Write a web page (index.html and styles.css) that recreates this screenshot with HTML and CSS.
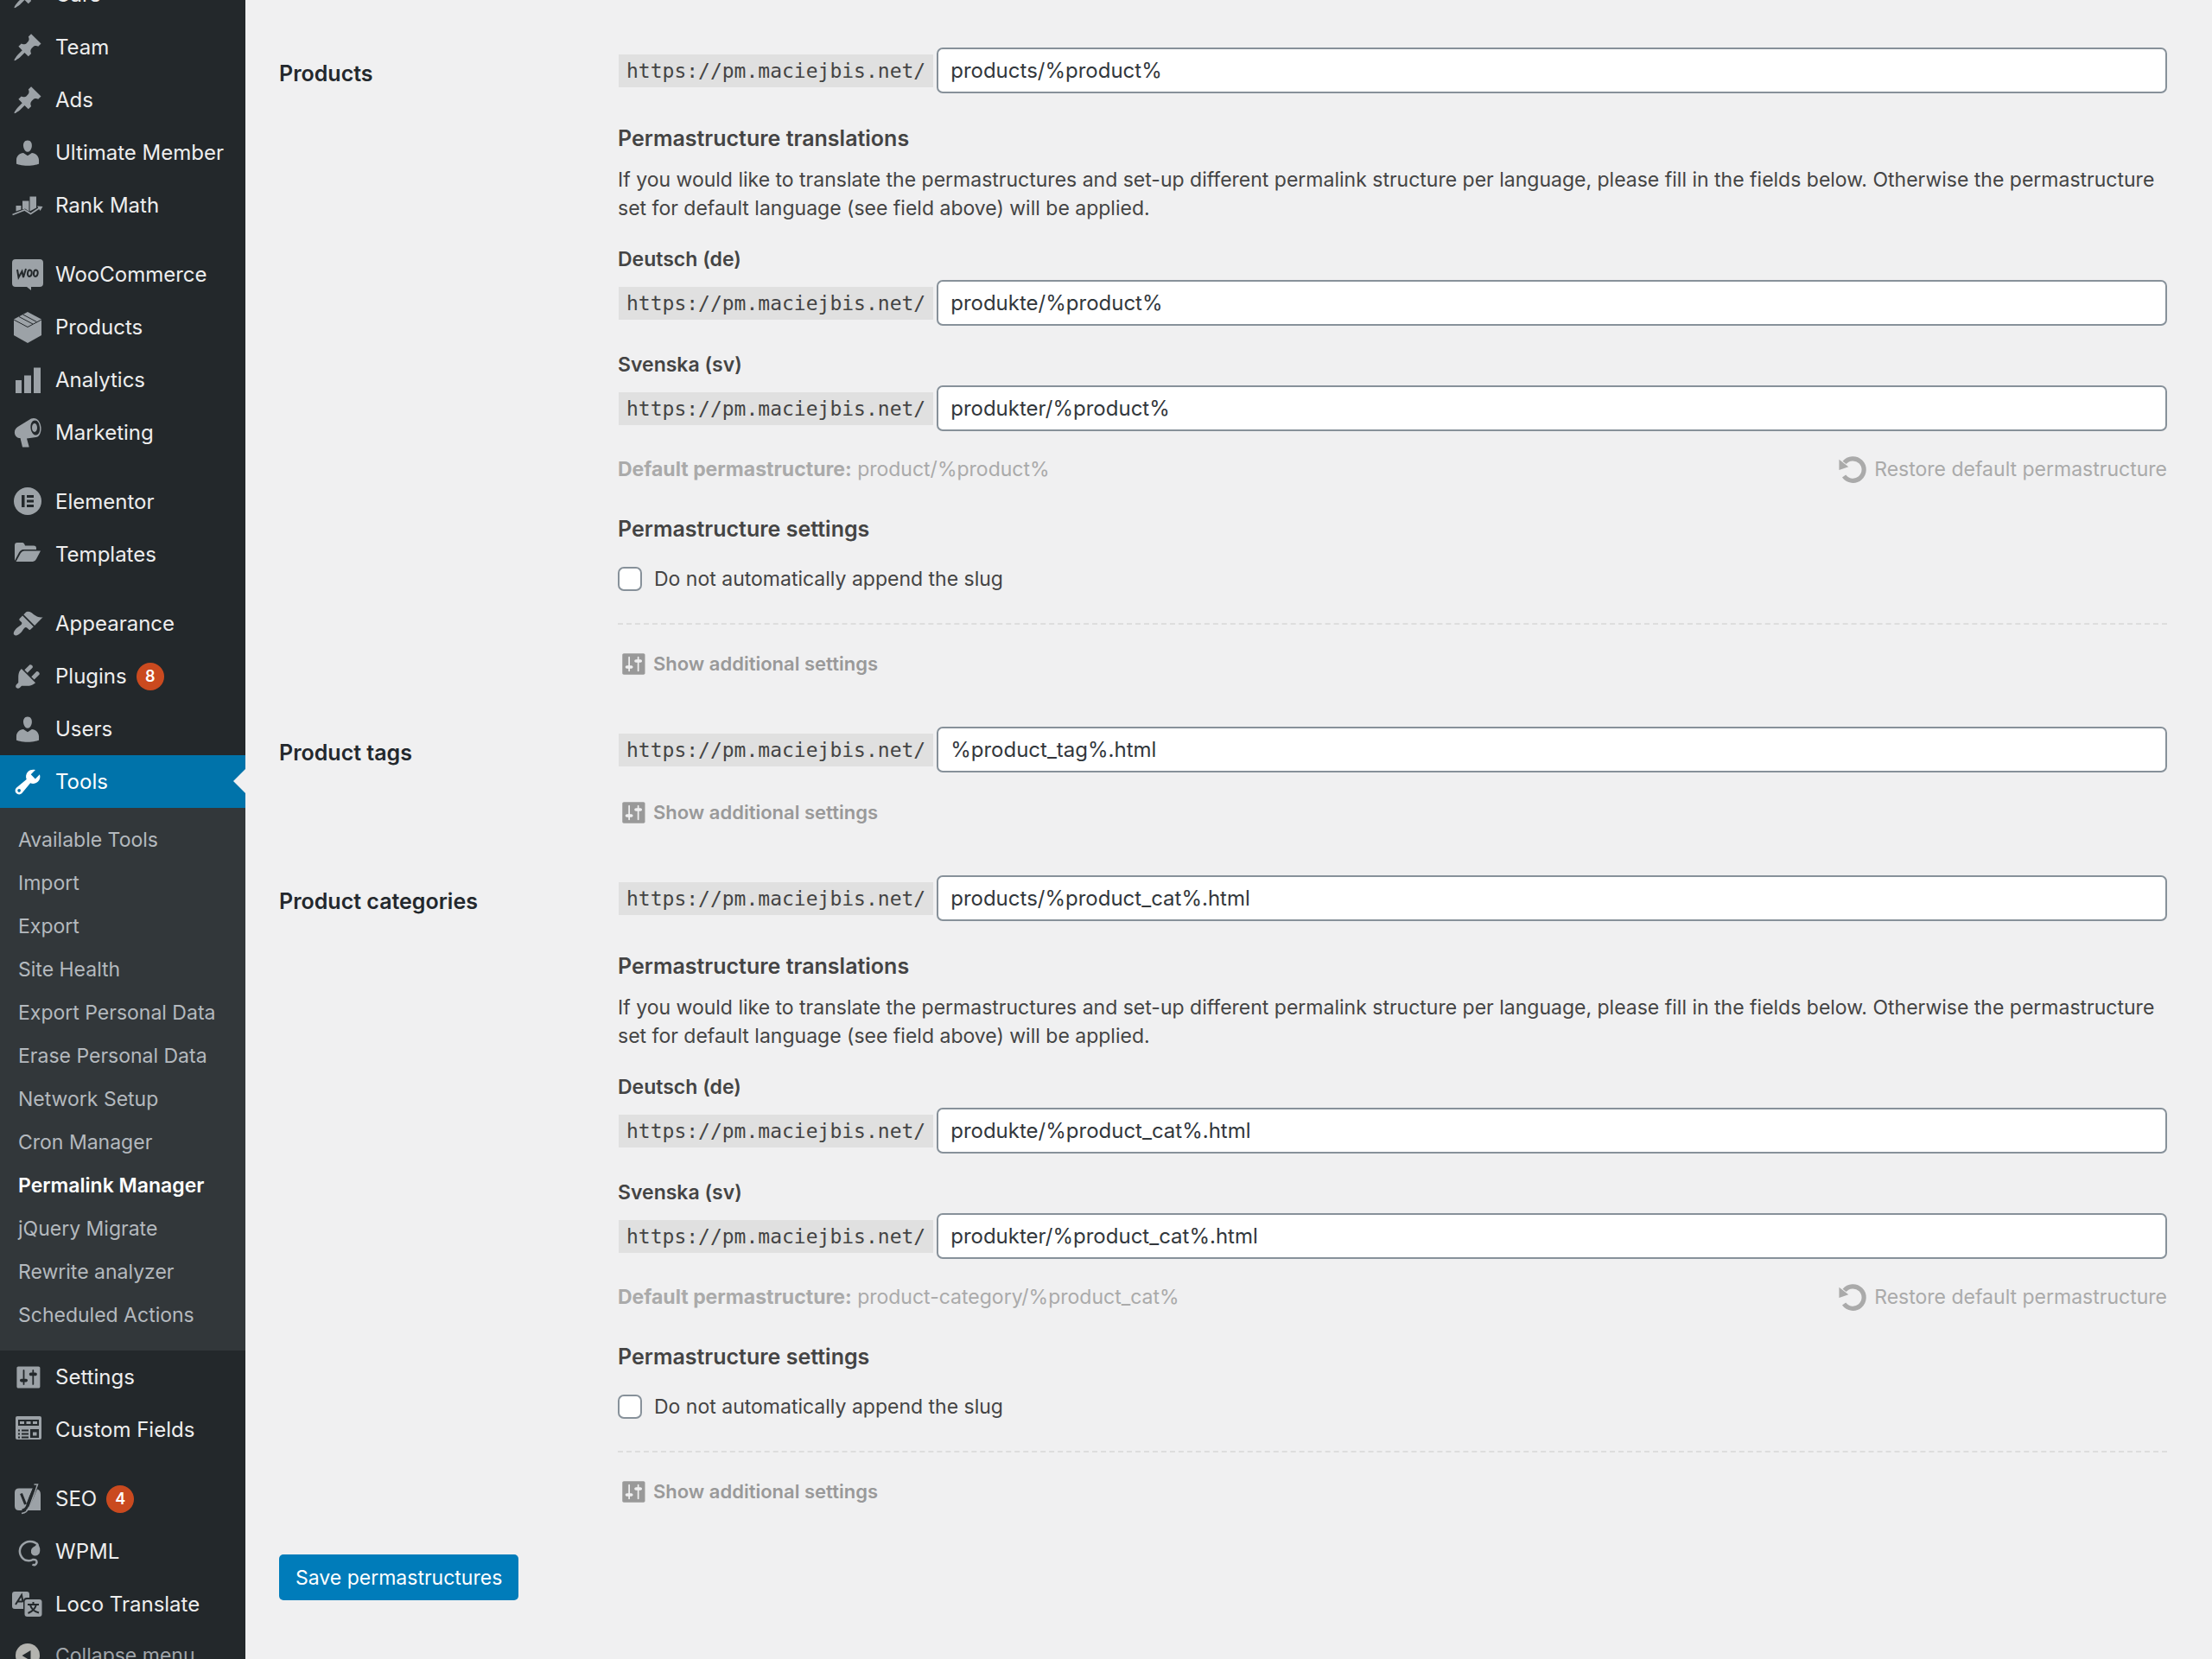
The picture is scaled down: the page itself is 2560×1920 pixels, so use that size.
FILE: index.html
```html
<!DOCTYPE html>
<html lang="en">
<head>
<meta charset="utf-8">
<title>Permalink Manager</title>
<link rel="stylesheet" href="styles.css">
</head>
<body>
<svg class="sprite" aria-hidden="true">
  <symbol id="pin" viewBox="0 0 20 20"><path d="M10.44 3.02l1.82-1.82 6.36 6.35-1.83 1.82c-1.05-.68-2.48-.57-3.41.36l-.75.75c-.92.93-1.04 2.35-.35 3.41l-1.83 1.82-2.41-2.41-2.8 2.79c-.42.42-3.38 2.71-3.8 2.29s1.86-3.39 2.28-3.81l2.79-2.79L4.1 9.36l1.83-1.82c1.05.69 2.48.57 3.4-.36l.75-.75c.93-.92 1.05-2.35.36-3.41z"/></symbol>
  <symbol id="user" viewBox="0 0 20 20"><path d="M10 9.25c-2.27 0-2.73-3.44-2.73-3.44C7 4.02 7.82 2 9.97 2c2.16 0 2.98 2.02 2.71 3.81 0 0-.41 3.44-2.68 3.44zm0 2.57L12.72 10c2.39 0 4.52 2.33 4.52 4.53v2.49s-3.65 1.13-7.24 1.13c-3.65 0-7.24-1.13-7.24-1.13v-2.49c0-2.25 1.94-4.48 4.47-4.48z"/></symbol>
  <symbol id="sliders" viewBox="0 0 20 20"><path d="M18 16V4c0-.55-.45-1-1-1H4c-.55 0-1 .45-1 1v12c0 .55.45 1 1 1h13c.55 0 1-.45 1-1zM8 11h1c.55 0 1 .45 1 1s-.45 1-1 1H8v1.5c0 .28-.22.5-.5.5s-.5-.22-.5-.5V13H6c-.55 0-1-.45-1-1s.45-1 1-1h1V5.5c0-.28.22-.5.5-.5s.5.22.5.5V11zm5-2h-1c-.55 0-1-.45-1-1s.45-1 1-1h1V5.500c0-.28.22-.5.5-.5s.5.22.5.5V7h1c.55 0 1 .45 1 1s-.45 1-1 1h-1v5.500c0 .28-.22.5-.5.5s-.5-.22-.5-.5V9z"/></symbol>
  <symbol id="restore" viewBox="0 0 36 36"><path d="M8 10A13.500 13.500 0 1 1 7.500 26.500" fill="none" stroke="currentColor" stroke-width="5.500"/><path d="M1.500 6v13l11.500-4z"/></symbol>
</svg>
<div class="shell">
  <nav class="menu" aria-label="Main menu">
    <ul class="menu-list">
      <li><a class="item" href="#"><svg class="icon"><use href="#pin"/></svg>Cars</a></li>
      <li><a class="item" href="#"><svg class="icon"><use href="#pin"/></svg>Team</a></li>
      <li><a class="item" href="#"><svg class="icon"><use href="#pin"/></svg>Ads</a></li>
      <li><a class="item" href="#"><svg class="icon"><use href="#user"/></svg>Ultimate Member</a></li>
      <li><a class="item" href="#"><svg class="icon" viewBox="0 0 36 36"><path d="M4.500 18h6v4.500l-6 2zM12 12.500h7.500v12L15 21.500l-3 1zM20.500 7.500h7.500v13l-7.500 4z"/><path d="M.5 28.500l14-5.500 7 4.500 10.500-7" fill="none" stroke="currentColor" stroke-width="1.800"/><path d="M29 18.500l6.500.500-3 5z"/></svg>Rank Math</a></li>
      <li class="gap"><a class="item" href="#"><svg class="icon" viewBox="0 0 36 36"><path d="M4 0h28q4 0 4 4v24q0 4-4 4H22v4l-5-4H4q-4 0-4-4V4q0-4 4-4z"/><path class="cut-line" d="M6 12l1.500 9 4-7 1.500 7 3-10M20.500 12.500c-3 0-3.500 7.500-.5 7.500s4-7.500.5-7.500zM27.500 12.500c-3 0-3.500 7.500-.5 7.500s4-7.500.5-7.500z"/></svg>WooCommerce</a></li>
      <li><a class="item" href="#"><svg class="icon" viewBox="0 0 36 36"><path d="M18 0l16 8.500V27L18 36 2 27V8.500z"/><path class="cut-line thin" d="M2 9l16 8.500L34 9M8 5.500l16 8.500M12.500 3l16 8.500"/></svg>Products</a></li>
      <li><a class="item" href="#"><svg class="icon" viewBox="0 0 36 36"><path d="M4 18h7v15H4zM14 12.500h8V33h-8zM25 3.500h8V33h-8z"/></svg>Analytics</a></li>
      <li><a class="item" href="#"><svg class="icon" viewBox="0 0 36 36"><path fill-rule="evenodd" d="M22 1.500c6-2.500 11 3 11.500 10 .5 6-2 11.500-6 11.500l-10.500 1.500 2.500 9q.5 1-1 1h-6.500L9.500 24C6 24 3.500 22 3 18.500S4 13 6.500 11zM26.500 3.500c-3.500 0-5.500 4-5 9s3.500 8.500 6.500 8c3-.5 4.500-4 4-9s-2.500-8-5.500-8z"/><ellipse cx="26" cy="12" rx="3" ry="5"/></svg>Marketing</a></li>
      <li class="gap"><a class="item" href="#"><svg class="icon" viewBox="0 0 36 36"><circle cx="18" cy="17" r="16"/><path class="cut" d="M11 10h3.500v14H11zM17 10h8v3h-8zM17 15.500h8v3h-8zM17 21h8v3h-8z"/></svg>Elementor</a></li>
      <li><a class="item" href="#"><svg class="icon" viewBox="0 0 36 36"><path d="M3 25V7q0-3 3-3h6q2 0 3 3.500h10q3 0 3 3v1.500H13q-3 0-5 3.500z"/><path d="M4.500 26l5.500-10q1.500-2.500 4-2.500h19L28 23q-1.500 3-4 3z"/></svg>Templates</a></li>
      <li class="gap"><a class="item" href="#"><svg class="icon" viewBox="0 0 20 20"><path d="M14.480 11.060L7.410 3.990l1.500-1.500c.5-.56 2.300-.47 3.510.32 1.210.8 1.430 1.280 2.910 2.100 1.180.64 2.450 1.260 4.450.85zm-.71.71L6.700 4.700 4.930 6.470c-.39.39-.39 1.020 0 1.410l1.060 1.060c.39.39.39 1.030 0 1.420-.6.6-1.430 1.110-2.210 1.690-.35.26-.7.53-1.010.84C1.430 14.230.4 16.080 1.400 17.070c.99 1 2.840-.03 4.180-1.360.31-.31.58-.66.85-1.020.57-.78 1.080-1.610 1.690-2.210.39-.39 1.020-.39 1.410 0l1.060 1.060c.39.39 1.020.39 1.410 0z"/></svg>Appearance</a></li>
      <li><a class="item" href="#"><svg class="icon" viewBox="0 0 20 20"><path d="M13.110 4.360L9.870 7.600 8 5.730l3.240-3.240c.35-.34 1.050-.2 1.560.32.520.51.660 1.210.31 1.550zm-8 1.770l.91-1.120 9.010 9.010-1.190.84c-.71.71-2.630 1.160-3.820 1.160H6.140L4.900 17.260c-.59.59-1.540.59-2.120 0-.59-.58-.59-1.530 0-2.120l1.240-1.240v-3.880c0-1.130.4-3.190 1.090-3.890zm7.260 3.970l3.240-3.240c.34-.35 1.040-.21 1.550.31.520.51.660 1.210.31 1.550l-3.240 3.250z"/></svg>Plugins<span class="badge">8</span></a></li>
      <li><a class="item" href="#"><svg class="icon"><use href="#user"/></svg>Users</a></li>
      <li>
        <a class="item current" href="#"><svg class="icon" viewBox="0 0 20 20"><path d="M16.680 9.770c-1.340 1.340-3.300 1.670-4.950.99l-5.410 6.520c-.99.99-2.590.99-3.580 0s-.99-2.590 0-3.570l6.520-5.420c-.68-1.650-.35-3.610.99-4.950 1.280-1.280 3.120-1.620 4.720-1.060l-2.890 2.890 2.820 2.820 2.860-2.870c.53 1.580.18 3.390-1.080 4.650zM3.810 16.210c.4.39 1.040.39 1.430 0 .4-.4.4-1.040 0-1.430-.39-.4-1.030-.4-1.430 0-.39.39-.39 1.030 0 1.430z"/></svg>Tools</a>
        <ul class="submenu">
          <li><a href="#">Available Tools</a></li>
          <li><a href="#">Import</a></li>
          <li><a href="#">Export</a></li>
          <li><a href="#">Site Health</a></li>
          <li><a href="#">Export Personal Data</a></li>
          <li><a href="#">Erase Personal Data</a></li>
          <li><a href="#">Network Setup</a></li>
          <li><a href="#">Cron Manager</a></li>
          <li><a class="active" href="#" aria-current="page">Permalink Manager</a></li>
          <li><a href="#">jQuery Migrate</a></li>
          <li><a href="#">Rewrite analyzer</a></li>
          <li><a href="#">Scheduled Actions</a></li>
        </ul>
      </li>
      <li><a class="item" href="#"><svg class="icon"><use href="#sliders"/></svg>Settings</a></li>
      <li><a class="item" href="#"><svg class="icon" viewBox="0 0 36 36"><rect x="4" y="2" width="30" height="27" rx="2"/><path class="cut" d="M7 6h24v7H7zM21 17h10v10H21zM7 17.500h2v2H7zM7 21.500h2v2H7zM7 25.500h2v2H7zM11 17.500h8v2h-8zM11 21.500h8v2h-8zM11 25.500h8v2h-8z"/><path d="M9 8h5v3H9zM16.500 8h5v3h-5zM24 8h5v3h-5zM24 20.500h4.500v4H24z"/></svg>Custom Fields</a></li>
      <li class="gap"><a class="item" href="#"><svg class="icon" viewBox="0 0 36 36"><path d="M8 5.500h16l-4 9-3 8L20 31H8q-5 0-5-5V10.500q0-5 5-5z"/><path d="M29 6.500q4 1 4 6V31H18.500z"/><path d="M25.500 1h4l-9 25q-3 8-9.500 8.500" fill="none" stroke="currentColor" stroke-width="1.500"/><path class="cut-line heavy" d="M10.500 11.500l5 12.500M26 4l-8.500 22q-1.500 4.500-6 5"/></svg>SEO<span class="badge">4</span></a></li>
      <li><a class="item" href="#"><svg class="icon" viewBox="0 0 36 36"><path d="M30 10A12 11.500 0 1 0 15 27.500q6 1.500 9-.5 5-.5 4.500 3.500-1.500 4-5 2" fill="none" stroke="currentColor" stroke-width="2.500"/><path d="M29 7q5 7 2.500 13-4 4.500-8.500 1-3-5 1.500-8.500 4-2 4.500-5.500z"/></svg>WPML</a></li>
      <li><a class="item" href="#"><svg class="icon" viewBox="0 0 36 36"><path d="M3 3h14q3 0 3 3v4h-3q-4 0-4 4v9H3q-3 0-3-3V6q0-3 3-3z"/><rect x="14.500" y="12" width="20" height="20" rx="3"/><path class="cut-line" d="M4 18L11 7l1.500 8M6.500 14.500h6M18 18h13M24.500 15v3M28 18q-2 7-9.500 10M21 18.500q2 7 10 9"/></svg>Loco Translate</a></li>
      <li><button class="item collapse" type="button"><svg class="icon" viewBox="0 0 36 36"><circle cx="18" cy="18" r="14"/><path class="cut" d="M11.500 18l10-6v12z"/></svg>Collapse menu</button></li>
    </ul>
  </nav>

  <main class="content">
    <form class="form">
      <section class="row">
        <label class="row-title" for="products">Products</label>
        <div class="fields">
          <div class="field"><code class="host">https://pm.maciejbis.net/</code><input class="text" id="products" type="text" value="products/%product%"></div>
          <h3 class="heading heading-first">Permastructure translations</h3>
          <p class="note">If you would like to translate the permastructures and set-up different permalink structure per language, please fill in the fields below. Otherwise the permastructure set for default language (see field above) will be applied.</p>
          <div class="locales">
            <div class="locale"><label class="lang" for="products-de">Deutsch (de)</label><div class="field"><code class="host">https://pm.maciejbis.net/</code><input class="text" id="products-de" type="text" value="produkte/%product%"></div></div>
            <div class="locale"><label class="lang" for="products-sv">Svenska (sv)</label><div class="field"><code class="host">https://pm.maciejbis.net/</code><input class="text" id="products-sv" type="text" value="produkter/%product%"></div></div>
          </div>
          <div class="defaults"><span><strong>Default permastructure:</strong> product/%product%</span><a class="restore" href="#"><svg class="restore-icon"><use href="#restore"/></svg>Restore default permastructure</a></div>
          <h3 class="heading">Permastructure settings</h3>
          <label class="check"><input class="box" type="checkbox">Do not automatically append the slug</label>
          <hr class="rule">
          <a class="more more-ruled" href="#"><svg class="more-icon"><use href="#sliders"/></svg>Show additional settings</a>
        </div>
      </section>

      <section class="row">
        <label class="row-title" for="tags">Product tags</label>
        <div class="fields">
          <div class="field"><code class="host">https://pm.maciejbis.net/</code><input class="text" id="tags" type="text" value="%product_tag%.html"></div>
          <a class="more" href="#"><svg class="more-icon"><use href="#sliders"/></svg>Show additional settings</a>
        </div>
      </section>

      <section class="row">
        <label class="row-title" for="cats">Product categories</label>
        <div class="fields">
          <div class="field"><code class="host">https://pm.maciejbis.net/</code><input class="text" id="cats" type="text" value="products/%product_cat%.html"></div>
          <h3 class="heading heading-first">Permastructure translations</h3>
          <p class="note">If you would like to translate the permastructures and set-up different permalink structure per language, please fill in the fields below. Otherwise the permastructure set for default language (see field above) will be applied.</p>
          <div class="locales">
            <div class="locale"><label class="lang" for="cats-de">Deutsch (de)</label><div class="field"><code class="host">https://pm.maciejbis.net/</code><input class="text" id="cats-de" type="text" value="produkte/%product_cat%.html"></div></div>
            <div class="locale"><label class="lang" for="cats-sv">Svenska (sv)</label><div class="field"><code class="host">https://pm.maciejbis.net/</code><input class="text" id="cats-sv" type="text" value="produkter/%product_cat%.html"></div></div>
          </div>
          <div class="defaults"><span><strong>Default permastructure:</strong> product-category/%product_cat%</span><a class="restore" href="#"><svg class="restore-icon"><use href="#restore"/></svg>Restore default permastructure</a></div>
          <h3 class="heading">Permastructure settings</h3>
          <label class="check"><input class="box" type="checkbox">Do not automatically append the slug</label>
          <hr class="rule">
          <a class="more more-ruled" href="#"><svg class="more-icon"><use href="#sliders"/></svg>Show additional settings</a>
        </div>
      </section>

      <button class="save" type="submit">Save permastructures</button>
    </form>
  </main>
</div>
</body>
</html>
```
FILE: styles.css
```css
*, *::before, *::after { box-sizing: border-box; }

body {
  margin: 0;
  background: #f0f0f1;
  color: #444;
  font: 23px/32px Inter, "Liberation Sans", sans-serif;
}

a { color: inherit; text-decoration: none; }
ul { list-style: none; margin: 0; padding: 0; }
svg { fill: currentColor; flex: none; }
.sprite { display: none; }

.shell {
  display: grid;
  grid-template-columns: 284px 1fr;
  height: 100vh;
  overflow: hidden;
}

/* Sidebar */
.menu { background: #23282b; color: #eee; overflow: hidden; }
.menu-list { margin-top: -37px; }
.gap { margin-top: 19px; }

.item {
  position: relative;
  display: flex;
  align-items: center;
  gap: 14px;
  width: 100%;
  height: 61px;
  padding: 0 14px;
  border: 0;
  background: none;
  color: inherit;
  font: inherit;
  font-size: 24px;
  white-space: nowrap;
}
.icon { width: 36px; height: 36px; color: #9ca2a7; }
.cut { fill: #23282b; }
.cut-line { fill: none; stroke: #23282b; stroke-width: 2; }
.cut-line.thin { stroke-width: 1; }
.cut-line.heavy { stroke-width: 3; }

.current { background: #0073aa; color: #fff; }
.current .icon { color: #fff; }
.current::after {
  content: "";
  position: absolute;
  right: 0;
  top: 16px;
  border: 14px solid transparent;
  border-left-width: 0;
  border-right-color: #f0f0f1;
}

.badge {
  width: 32px;
  height: 32px;
  margin-left: -3px;
  border-radius: 16px;
  background: #ca4a1f;
  color: #fff;
  font-size: 18px;
  font-weight: 600;
  text-align: center;
}

.submenu { padding: 12px 0 16px; background: #32373a; color: #b4b9be; }
.submenu a {
  display: block;
  padding: 0 21px;
  line-height: 50px;
  white-space: nowrap;
}
.submenu .active { color: #fff; font-weight: 600; }
.collapse { height: 58px; color: #a0a5aa; font-size: 23px; }
.collapse .icon { color: #b4b4b0; }

/* Settings form */
.content { padding: 55px 52px 0 39px; }
.form { display: flex; flex-direction: column; align-items: stretch; gap: 57px; }
.row { display: grid; grid-template-columns: 392px 1fr; }
.row-title {
  padding-top: 14px;
  color: #23282d;
  font-size: 25px;
  font-weight: 600;
}
.fields { display: flex; flex-direction: column; min-width: 0; }

.field { display: flex; align-items: center; gap: 4px; }
.host {
  margin-left: 1px;
  padding: 0 9px;
  background: #e0e0e0;
  font: 23px/38px "DejaVu Sans Mono", monospace;
}
.text {
  flex: 1;
  min-width: 0;
  height: 53px;
  padding: 0 14px;
  border: 2px solid #87919a;
  border-radius: 7px;
  background: #fff;
  color: #32373c;
  font: inherit;
  font-size: 24px;
}

.heading { margin: 37px 0 0; font-size: 25px; line-height: 32px; font-weight: 600; }
.heading-first { margin-top: 36px; }
.note { margin: 16px 0 0; line-height: 33px; }
.locales { display: flex; flex-direction: column; gap: 29px; margin-top: 26px; }
.locale { display: flex; flex-direction: column; gap: 7px; }
.lang { line-height: 33px; font-weight: 600; }

.defaults {
  display: flex;
  justify-content: space-between;
  height: 32px;
  margin-top: 28px;
  color: #aaa;
}
.defaults strong { font-weight: 700; }
.restore { display: flex; align-items: center; gap: 8px; }
.restore-icon { width: 34px; height: 34px; }

.check { display: flex; align-items: center; gap: 14px; margin-top: 26px; }
.box {
  appearance: none;
  width: 28px;
  height: 28px;
  margin: 0;
  border: 2px solid #87919a;
  border-radius: 7px;
  background: #fff;
}
.rule {
  width: 100%;
  margin: 35px 0 0;
  border: 0;
  border-top: 2px dashed #ddd;
}
.more {
  display: flex;
  align-items: center;
  gap: 6px;
  height: 32px;
  margin-top: 30px;
  color: #999;
  font-size: 22px;
  font-weight: 600;
}
.more-ruled { margin-top: 29px; }
.more-icon { width: 35px; height: 35px; }

.save {
  align-self: flex-start;
  height: 53px;
  padding: 0 19px;
  border: 0;
  border-radius: 5px;
  background: #007cba;
  color: #fff;
  font: inherit;
}
```
